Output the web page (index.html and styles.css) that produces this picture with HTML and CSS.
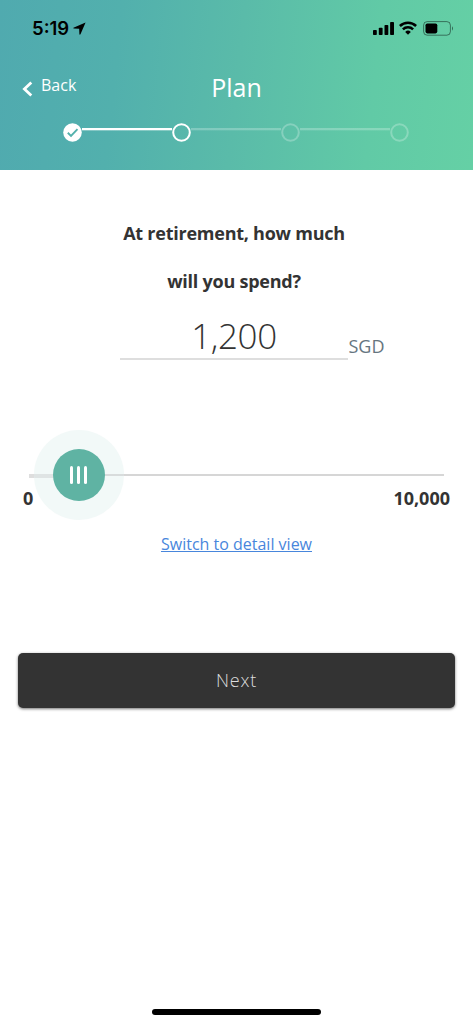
FILE: index.html
```html
<!DOCTYPE html>
<html lang="en">
<head>
<meta charset="utf-8">
<title>Plan</title>
<link rel="stylesheet" href="styles.css">
</head>
<body>
<div class="screen">
  <header class="header">
    <div class="status">
      <div class="status-left">
        <span class="time">5:19</span>
        <svg class="location" width="13" height="13" viewBox="0 0 12 12"><path d="M11.6.4.4 5.2Q0 5.9.7 6.1l5 .2.2 5q.4.8 1 0z"/></svg>
      </div>
      <div class="status-right">
        <svg width="21" height="13" viewBox="0 0 21 13"><rect y="7.9" width="3.8" height="5.1" rx=".8"/><rect x="5.8" y="5.7" width="3.8" height="7.3" rx=".8"/><rect x="11.5" y="2.9" width="3.8" height="10.1" rx=".8"/><rect x="17.1" y="0" width="3.9" height="13" rx=".8"/></svg>
        <svg class="wifi" width="18" height="14" viewBox="0 0 18 14"><g fill="none" stroke="#000" stroke-width="2.5"><path d="M.9 5a11.5 11.5 0 0 1 16.2 0"/><path d="M3.9 8.4a7.2 7.2 0 0 1 10.2 0"/></g><path d="M9 13.8 6.2 10.9a4 4 0 0 1 5.6 0z"/></svg>
        <svg class="battery" width="31" height="15" viewBox="0 0 31 15"><rect x=".6" y=".6" width="26.8" height="13.6" rx="3.6" fill="none" stroke="#000" stroke-opacity=".45"/><rect x="2.5" y="2.4" width="11.8" height="10" rx="1.8"/><path d="M29 5.2q2 2.2 0 4.5z" fill-opacity=".5"/></svg>
      </div>
    </div>
    <nav class="nav">
      <a class="back"><svg width="11" height="16" viewBox="0 0 11 16"><path d="M9.3 1.5 2.4 8l6.9 6.5" fill="none" stroke="#fff" stroke-width="2.8"/></svg><span>Back</span></a>
      <h1 class="title">Plan</h1>
    </nav>
    <div class="stepper">
      <svg class="step" viewBox="0 0 19 19"><circle cx="9.5" cy="9.5" r="9.3" fill="#fff"/><path d="m4.8 9.8 3.2 3.1 6.5-6.8" fill="none" stroke="#53b1ac" stroke-width="1.9"/></svg>
      <span class="line"></span>
      <svg class="step" viewBox="0 0 19 19"><circle cx="9.5" cy="9.5" r="8.3" fill="none" stroke="#fff" stroke-width="2"/></svg>
      <span class="line pending"></span>
      <svg class="step pending" viewBox="0 0 19 19"><circle cx="9.5" cy="9.5" r="8.3" fill="none" stroke="#fff" stroke-width="2"/></svg>
      <span class="line pending"></span>
      <svg class="step pending" viewBox="0 0 19 19"><circle cx="9.5" cy="9.5" r="8.3" fill="none" stroke="#fff" stroke-width="2"/></svg>
    </div>
  </header>
  <main class="main">
    <h2 class="question">At retirement, how much<br>will you spend?</h2>
    <div class="amount"><div class="value">1,200</div><span class="currency">SGD</span></div>
    <div class="slider">
      <span class="track-start"></span>
      <span class="thumb"><span class="knob"><i></i><i></i><i></i></span></span>
      <span class="track"></span>
    </div>
    <div class="range"><span>0</span><span>10,000</span></div>
    <a class="switch">Switch to detail view</a>
    <button class="next">Next</button>
  </main>
  <footer class="home"></footer>
</div>
</body>
</html>
```
FILE: styles.css
```css
* { box-sizing: border-box; }
body { margin: 0; font-family: "Open Sans", "Noto Sans", sans-serif; background: #fff; color: #333; }
.screen { width: 473px; height: 1024px; display: flex; flex-direction: column; overflow: hidden; }
.header { height: 170px; flex: none; background: linear-gradient(96deg, #50aaaf 0%, #52b0ad 25%, #5abba9 50%, #61caa6 78%, #65d0a5 100%); }
.status { height: 56px; padding: 0 19px 0 32px; display: flex; justify-content: space-between; align-items: center; }
.status-left, .status-right { display: flex; align-items: center; }
.time { font: 600 18.5px/22px Inter, sans-serif; color: #000; letter-spacing: 0; }
.location { margin-left: 4px; }
.wifi { margin-left: 5px; }
.battery { margin-left: 6px; }
.nav { height: 62px; display: grid; grid-template-columns: 1fr auto 1fr; align-items: center; color: #fff; }
.back { padding-left: 22px; display: flex; align-items: center; font-size: 16px; line-height: 22px; }
.back svg { margin: 0 0 -6px; }
.back span { margin: -5px 0 0 8px; }
.back svg { margin: 0 0 -4px; }
.title { margin: 0; font-size: 25px; line-height: 34px; font-weight: 400; }
.stepper { width: 346px; margin: 5px 0 0 63px; display: flex; align-items: flex-start; }
.step { width: 19px; height: 19px; flex: none; }
.line { flex: 1; height: 3px; margin-top: 5px; background: linear-gradient(#fff 2px, rgba(255,255,255,.3) 2px); }
.pending { opacity: .25; }
.main { flex: 1; display: flex; flex-direction: column; }
.question { width: 468px; margin: 39px 0 0; text-align: center; font-size: 18px; line-height: 48px; font-weight: 700; letter-spacing: -0.24px; }
.amount { margin: 8px 0 0 120px; display: flex; align-items: flex-end; }
.value { width: 228px; height: 47px; border-bottom: 2px solid #dedede; text-align: center; font-size: 35px; line-height: 45px; font-weight: 300; letter-spacing: -0.4px; }
.currency { margin: 0 0 2px 0.5px; font-size: 18px; line-height: 24px; color: #66757f; }
.slider { height: 90px; margin: 70px 29px 0; display: flex; align-items: center; }
.track-start { width: 5px; height: 4px; margin-top: 2px; background: #dedede; }
.thumb { width: 90px; height: 90px; border-radius: 50%; display: flex; align-items: center; justify-content: center; background: linear-gradient(#dfe4e4, #dfe4e4) 0 44px / 20px 4px no-repeat, linear-gradient(#d8dcdc, #d8dcdc) 100% 44px / 20px 2px no-repeat, #f2f9f8; }
.knob { width: 52px; height: 52px; border-radius: 50%; background: #5fb3a3; display: flex; gap: 4px; align-items: center; justify-content: center; padding-right: 2px; }
.knob i { width: 3px; height: 18px; border-radius: 2px; background: #fff; }
.track { flex: 1; height: 2px; background: #d6d6d6; }
.range { margin: -34px 23px 0; display: flex; justify-content: space-between; font-size: 18px; line-height: 24px; font-weight: 700; }
.switch { align-self: center; margin-top: 23px; font-size: 16px; line-height: 22px; color: #4886dc; text-decoration: underline; }
.next { height: 55px; margin: 98px 18px 0; padding: 0; border: 0; border-radius: 5px; background: #333; color: #ddd; font: 300 18px/55px "Open Sans", sans-serif; letter-spacing: 0.8px; box-shadow: 0 1px 3px rgba(0,0,0,.55); }
.home { width: 169px; height: 6px; flex: none; margin: 0 auto 9px; border-radius: 3px; background: #000; }
```
